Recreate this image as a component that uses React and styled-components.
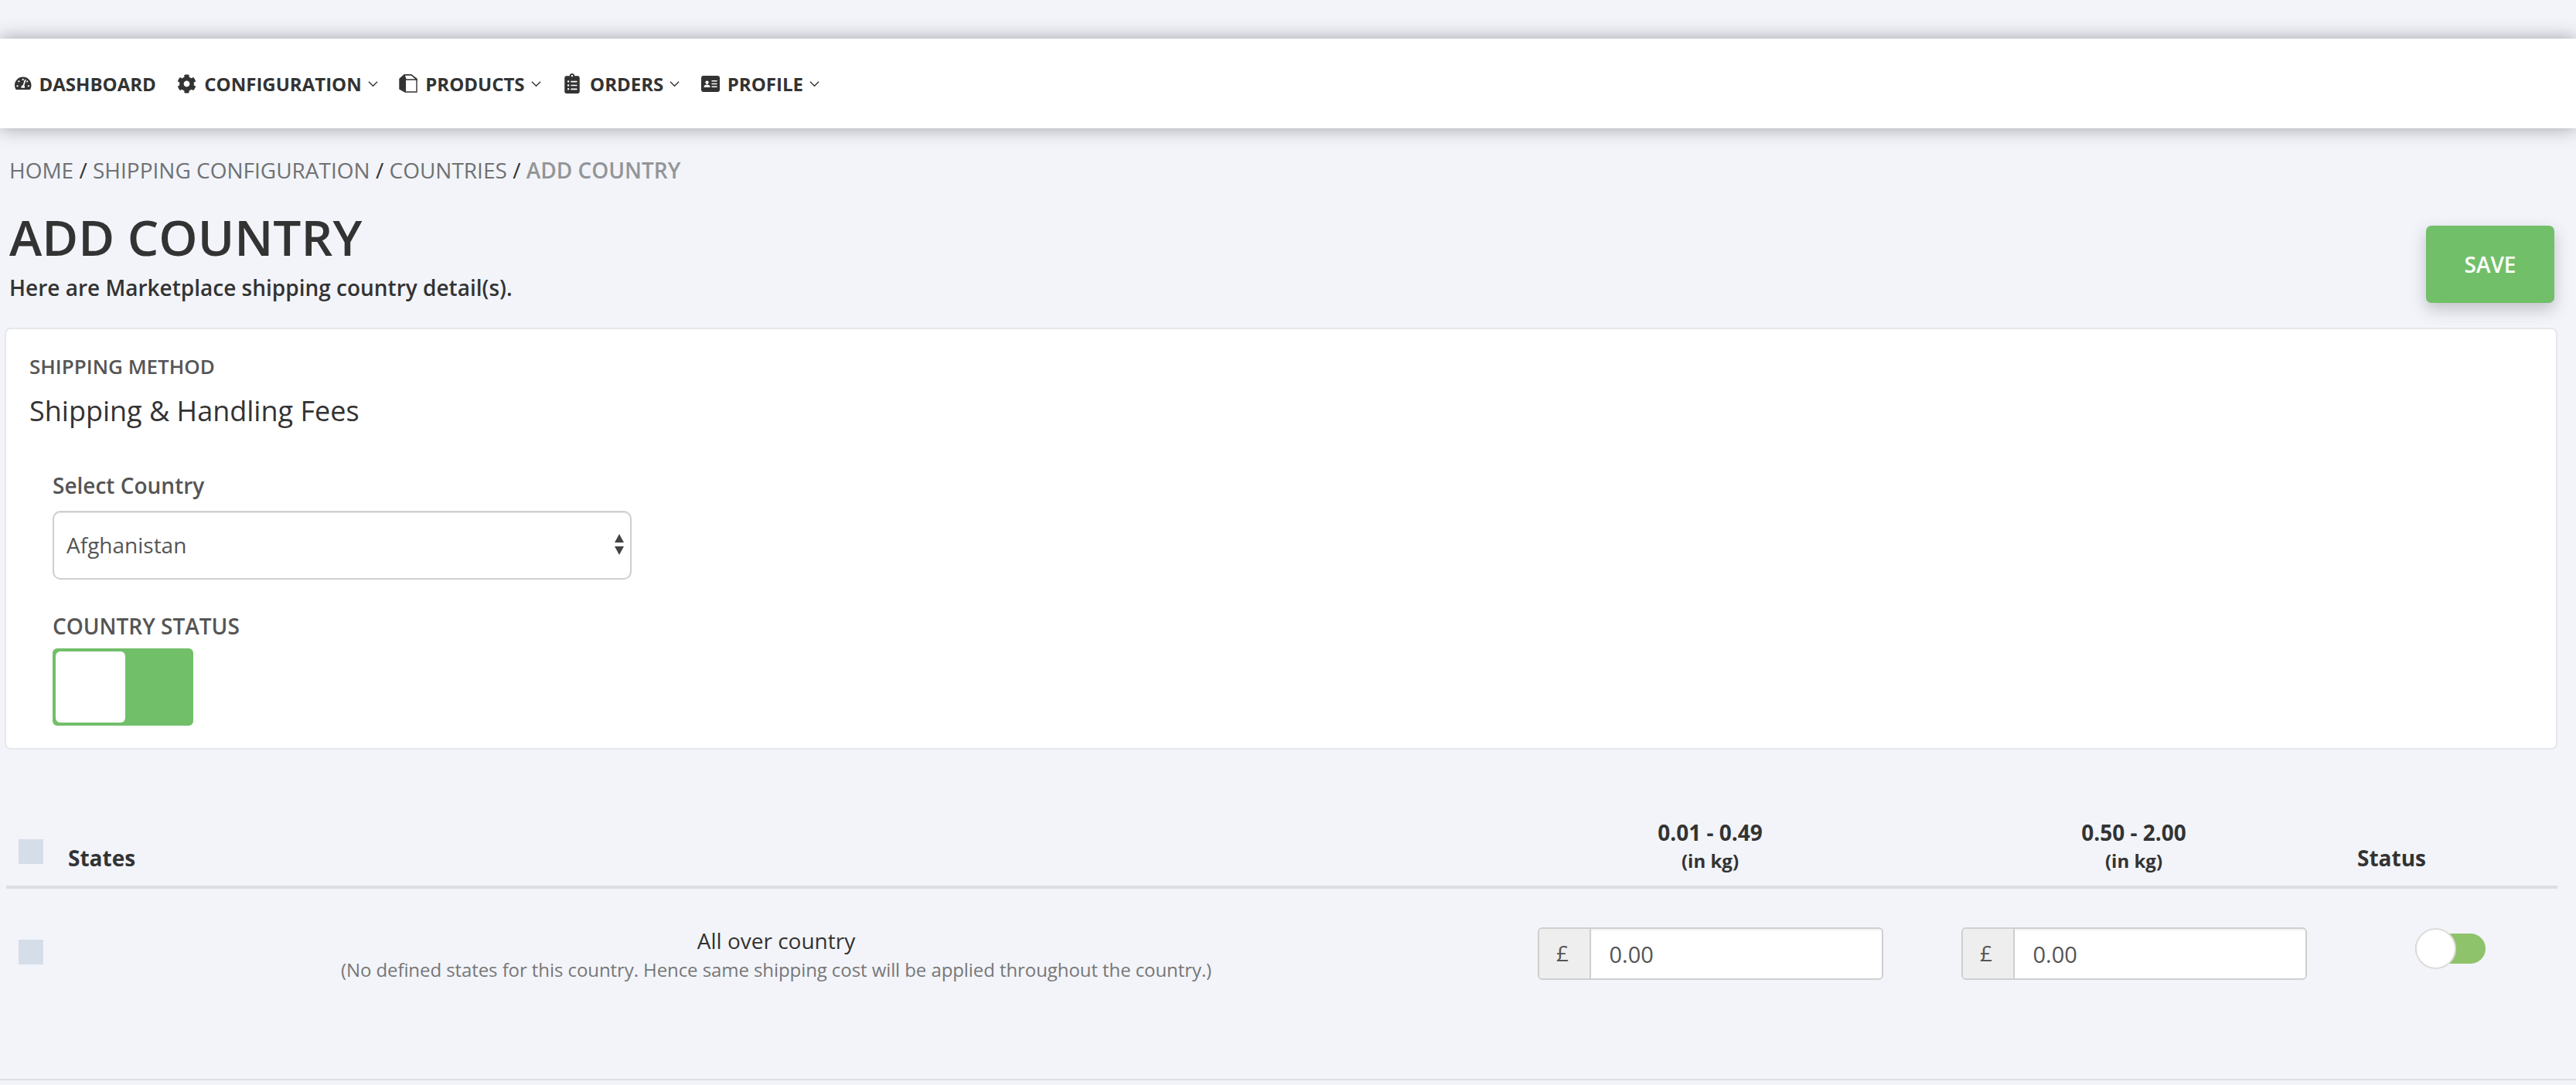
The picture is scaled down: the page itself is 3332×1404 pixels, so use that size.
import React from 'react';
import styled, { createGlobalStyle } from 'styled-components';
import { FaTachometerAlt, FaCog, FaClipboardList } from 'react-icons/fa';

const GlobalStyle = createGlobalStyle`
  html, body {
    margin: 0;
    padding: 0;
    background: #f2f4f9;
    font-family: "Open Sans", "Liberation Sans", sans-serif;
    color: #333;
  }
  * { box-sizing: border-box; }
`;

const Chevron = () => (
  <ChevronSvg viewBox="0 0 14 9">
    <path d="M1 1.5l6 6 6-6" fill="none" stroke="#333" strokeWidth="1.5" />
  </ChevronSvg>
);

const BoxIcon = () => (
  <svg viewBox="0 0 24 24">
    <path d="M1 6l6-5h9l7 5v17H8L1 19z" fill="#fff" stroke="#333" strokeWidth="1.4" />
    <path d="M1 6l6-5 2 6v16l-8-4z" fill="#333" />
    <path d="M7 1h9l7 6H9z" fill="#fff" stroke="#333" strokeWidth="1.4" />
  </svg>
);

const CardIcon = () => (
  <svg viewBox="0 0 24 21">
    <path
      fillRule="evenodd"
      fill="#333"
      d="M3 0h18a3 3 0 0 1 3 3v15a3 3 0 0 1-3 3H3a3 3 0 0 1-3-3V3a3 3 0 0 1 3-3zM7.500 6.500a2.200 2.200 0 1 0 .01 0zM3.500 14.500c0-2 1.500-3 4-3s4 1 4 3v.5h-8zM13.500 6h7v1.600h-7zM13.500 9.700h7v1.600h-7zM13.500 13.400h7v1.600h-7z"
    />
  </svg>
);

const NAV_ITEMS = [
  { label: 'DASHBOARD', icon: <FaTachometerAlt />, size: 21.5 },
  { label: 'CONFIGURATION', icon: <FaCog />, size: 25 },
  { label: 'PRODUCTS', icon: <BoxIcon />, size: 24 },
  { label: 'ORDERS', icon: <FaClipboardList />, size: 26 },
  { label: 'PROFILE', icon: <CardIcon />, size: 21 },
];

const App = () => {
  return (
    <>
      <GlobalStyle />
      <Page>
        <Nav>
          {NAV_ITEMS.map((item) => (
            <NavItem key={item.label}>
              <NavIcon $size={item.size}>{item.icon}</NavIcon>
              <span>{item.label}</span>
              {item.label !== 'DASHBOARD' && <Chevron />}
            </NavItem>
          ))}
        </Nav>

        <Breadcrumb>
          <Crumb>HOME</Crumb> / <Crumb>SHIPPING CONFIGURATION</Crumb> / <Crumb>COUNTRIES</Crumb> / <CurrentCrumb>ADD COUNTRY</CurrentCrumb>
        </Breadcrumb>

        <Header>
          <div>
            <Title>ADD COUNTRY</Title>
            <Subtitle>Here are Marketplace shipping country detail(s).</Subtitle>
          </div>
          <SaveButton>SAVE</SaveButton>
        </Header>

        <Card>
          <Eyebrow>SHIPPING METHOD</Eyebrow>
          <CardTitle>Shipping &amp; Handling Fees</CardTitle>
          <Form>
            <FieldLabel>Select Country</FieldLabel>
            <SelectWrap>
              <Select defaultValue="Afghanistan">
                <option>Afghanistan</option>
              </Select>
              <SelectArrows viewBox="0 0 14 27">
                <path d="M7 0l6 11H1zM7 27L1 16h12z" fill="#444" />
              </SelectArrows>
            </SelectWrap>
            <StatusLabel>COUNTRY STATUS</StatusLabel>
            <BigToggle>
              <BigThumb />
            </BigToggle>
          </Form>
        </Card>

        <TableHead>
          <HeadCheck><CheckBox /></HeadCheck>
          <StatesHead>States</StatesHead>
          <RangeHead>
            <strong>0.01 - 0.49</strong>
            <small>(in kg)</small>
          </RangeHead>
          <RangeHead>
            <strong>0.50 - 2.00</strong>
            <small>(in kg)</small>
          </RangeHead>
          <StatusHead>Status</StatusHead>
        </TableHead>

        <TableRow>
          <RowCheck><CheckBox /></RowCheck>
          <RowText>
            <RowName>All over country</RowName>
            <RowNote>(No defined states for this country. Hence same shipping cost will be applied throughout the country.)</RowNote>
          </RowText>
          <PriceCell>
            <PriceGroup>
              <Addon>£</Addon>
              <PriceInput placeholder="0.00" />
            </PriceGroup>
          </PriceCell>
          <PriceCell>
            <PriceGroup>
              <Addon>£</Addon>
              <PriceInput placeholder="0.00" />
            </PriceGroup>
          </PriceCell>
          <ToggleCell>
            <SmallToggle>
              <SmallThumb />
            </SmallToggle>
          </ToggleCell>
        </TableRow>
      </Page>
    </>
  );
};

const Page = styled.div`
  width: 3332px;
  height: 1404px;
  padding-top: 50px;
  overflow: hidden;
  position: relative;
`;

const Nav = styled.nav`
  height: 116px;
  background: #fff;
  box-shadow: 0 0 22px rgba(40, 40, 50, 0.42);
  display: flex;
  align-items: center;
  gap: 27.5px;
  padding-left: 19px;
`;

const NavItem = styled.div`
  display: flex;
  align-items: center;
  font-size: 24px;
  font-weight: 700;
  color: #333;
`;

const NavIcon = styled.span`
  display: flex;
  align-items: center;
  margin-right: 10px;
  color: #333;

  svg {
    display: block;
    height: ${(p) => p.$size}px;
    width: auto;
  }
`;

const ChevronSvg = styled.svg`
  width: 13px;
  height: 9px;
  margin-left: 8px;
`;

const Breadcrumb = styled.div`
  margin-top: 34px;
  padding-left: 12px;
  font-size: 28px;
  line-height: 40px;
  color: #333;
`;

const Crumb = styled.span`
  color: #6f7173;
`;

const CurrentCrumb = styled.span`
  color: #939597;
  font-weight: 600;
`;

const Header = styled.div`
  display: flex;
  justify-content: space-between;
  align-items: flex-start;
  padding: 0 28px 0 12px;
`;

const Title = styled.h1`
  margin: 26px 0 0;
  font-size: 64px;
  line-height: 82px;
  font-weight: 600;
  color: #333;
`;

const Subtitle = styled.p`
  margin: 4px 0 0;
  font-size: 28px;
  line-height: 40px;
  font-weight: 600;
  color: #333;
`;

const SaveButton = styled.button`
  width: 166px;
  height: 100px;
  margin-top: 52px;
  border: 0;
  border-radius: 7px;
  background: #72bf6a;
  color: #fff;
  font-family: inherit;
  font-size: 28px;
  font-weight: 600;
  box-shadow: 0 8px 20px rgba(60, 60, 70, 0.28);
`;

const Card = styled.section`
  margin: 32px 24px 0 6px;
  height: 546px;
  padding: 30px 30px 0;
  background: #fff;
  border: 2px solid #e6e7ec;
  border-radius: 8px;
`;

const Eyebrow = styled.div`
  font-size: 26px;
  line-height: 36px;
  font-weight: 600;
  color: #555;
`;

const CardTitle = styled.h2`
  margin: 18px 0 0;
  font-size: 36px;
  line-height: 44px;
  font-weight: 400;
  color: #333;
`;

const Form = styled.div`
  padding: 56px 0 0 30px;
`;

const FieldLabel = styled.div`
  font-size: 28px;
  line-height: 36px;
  font-weight: 600;
  color: #555;
`;

const SelectWrap = styled.div`
  position: relative;
  width: 749px;
  margin-top: 15px;
`;

const Select = styled.select`
  display: block;
  width: 100%;
  height: 89px;
  padding: 0 16px 2px;
  appearance: none;
  background: #fff;
  border: 2px solid #cfcfcf;
  border-radius: 10px;
  box-shadow: inset 0 1px 1px rgba(0, 0, 0, 0.1);
  font-family: inherit;
  font-size: 28px;
  color: #555;
`;

const SelectArrows = styled.svg`
  position: absolute;
  top: 30px;
  right: 9px;
  width: 14px;
  height: 27px;
`;

const StatusLabel = styled.div`
  margin-top: 42px;
  font-size: 28px;
  line-height: 36px;
  font-weight: 600;
  color: #555;
`;

const BigToggle = styled.div`
  width: 182px;
  height: 100px;
  margin-top: 11px;
  padding: 4px;
  background: #72bf6a;
  border-radius: 6px;
`;

const BigThumb = styled.div`
  width: 90px;
  height: 92px;
  background: #fff;
  border-radius: 6px;
`;

const tableColumns = `
  display: grid;
  grid-template-columns: 80px 1832px 584px 512px 292px;
  margin: 0 24px 0 8px;
`;

const TableHead = styled.div`
  ${tableColumns}
  height: 180px;
  align-items: end;
  border-bottom: 4px solid #dcdde0;
`;

const HeadCheck = styled.div`
  align-self: start;
  padding: 116px 0 0 16px;
`;

const CheckBox = styled.div`
  width: 32px;
  height: 32px;
  background: #d5dde9;
`;

const StatesHead = styled.div`
  padding-bottom: 18px;
  font-size: 28px;
  line-height: 36px;
  font-weight: 700;
  color: #333;
`;

const RangeHead = styled.div`
  display: flex;
  flex-direction: column;
  align-items: center;
  padding-bottom: 14px;

  strong {
    font-size: 28px;
    line-height: 38px;
    font-weight: 700;
    color: #333;
  }

  small {
    font-size: 24px;
    line-height: 36px;
    font-weight: 700;
    color: #333;
  }
`;

const StatusHead = styled(StatesHead)`
  padding-left: 33px;
`;

const TableRow = styled.div`
  ${tableColumns}
  height: 248px;
  margin-right: 0;
  margin-left: 0;
  padding-left: 8px;
  border-bottom: 2px solid #dcdde2;
`;

const RowCheck = styled.div`
  padding: 66px 0 0 16px;
`;

const RowText = styled.div`
  padding-top: 48px;
  text-align: center;
`;

const RowName = styled.div`
  font-size: 28px;
  line-height: 38px;
  color: #333;
`;

const RowNote = styled.div`
  font-size: 24px;
  line-height: 38px;
  letter-spacing: -0.08px;
  color: #777;
`;

const PriceCell = styled.div`
  display: flex;
  justify-content: center;
  padding-top: 50px;
`;

const PriceGroup = styled.div`
  display: flex;
  align-self: flex-start;
  width: 447px;
  height: 68px;
  border: 2px solid #cfcfcf;
  border-radius: 6px;
  overflow: hidden;
`;

const Addon = styled.div`
  width: 67px;
  padding: 0 4px 2px 0;
  display: flex;
  align-items: center;
  justify-content: center;
  background: #eee;
  border-right: 2px solid #cfcfcf;
  font-size: 28px;
  color: #555;
`;

const PriceInput = styled.input`
  flex: 1;
  min-width: 0;
  padding: 0 24px;
  border: 0;
  outline: 0;
  background: #fff;
  box-shadow: inset 0 2px 2px rgba(0, 0, 0, 0.06);
  font-family: inherit;
  font-size: 29px;

  &::placeholder {
    color: #555;
    opacity: 1;
  }
`;

const ToggleCell = styled.div`
  padding: 52px 0 0 108px;
`;

const SmallToggle = styled.div`
  position: relative;
  width: 91px;
  height: 39px;
  margin-top: 6px;
  background: #8fc36b;
  border-radius: 20px;
`;

const SmallThumb = styled.div`
  position: absolute;
  top: -7px;
  left: 0;
  width: 53px;
  height: 53px;
  background: #fff;
  border: 2px solid #dcdcdc;
  border-radius: 50%;
`;

export default App;
